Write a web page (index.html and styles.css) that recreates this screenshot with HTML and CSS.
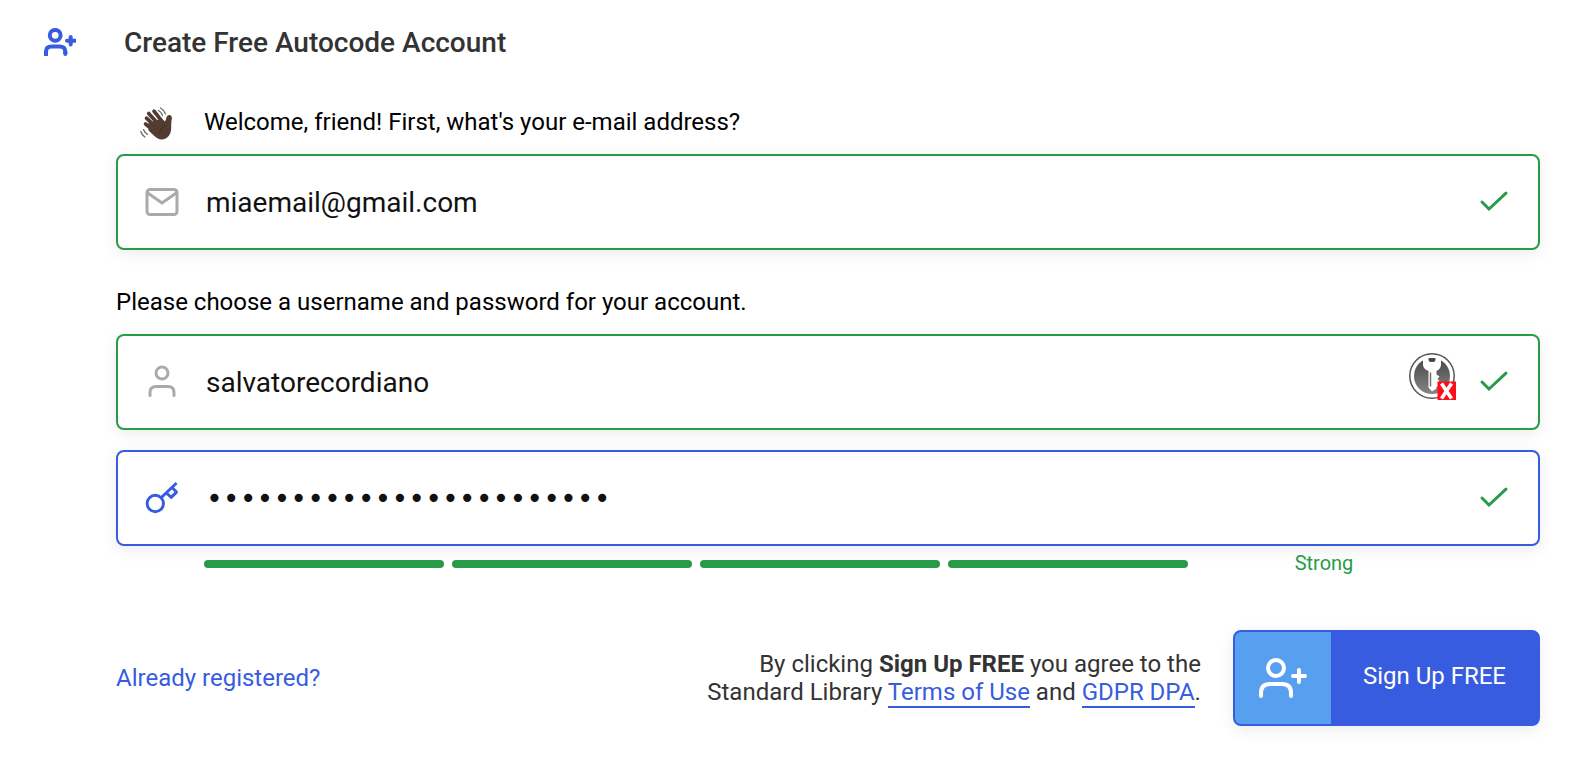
FILE: index.html
```html
<!DOCTYPE html>
<html lang="en">
<head>
<meta charset="utf-8">
<title>Create Free Autocode Account</title>
<link rel="stylesheet" href="styles.css">
</head>
<body>
<form class="signup">
  <header class="header">
    <svg class="header-icon" viewBox="0 0 32 28" aria-hidden="true">
      <g fill="none" stroke="currentColor" stroke-width="4">
        <circle cx="11.2" cy="7.3" r="5.4"/>
        <path d="M2 28v-4.500q0-5 5.500-5h8q5.800 0 5.800 5v2.500" />
        <path d="M21.300 24v2M26.700 9v7.400M23 12.700h9" stroke-linecap="round"/>
      </g>
    </svg>
    <h1 class="title">Create Free Autocode Account</h1>
  </header>

  <div class="content">
    <label class="prompt" for="email">
      <svg class="wave" viewBox="0 0 34 34" aria-hidden="true">
        <g fill="none" stroke="#523c32" stroke-width="3.700" stroke-linecap="round">
          <path d="M6.500 11.200l10 9.500M8.700 6.500l10 11M14 4.200l9 11.500M5.600 17l10 8"/>
        </g>
        <path d="M8.500 16L21.500 11.500l3.300 3c1.700-2 1.200-4.500 2.800-6 2.200-1.500 4.600.3 4.300 2.600-.4 2.800-.7 4.300-.7 7.200.3 7-1.500 11-5.500 13.300-4.500 2-8 .6-11.600-2.800L8.500 23.500z" fill="#523c32"/>
        <path d="M19.500 26c1-4 2.500-6.500 6-7.500" fill="none" stroke="#3a2922" stroke-width=".8"/>
        <g fill="none" stroke="#666" stroke-width="1.300" stroke-linecap="round">
          <path d="M18.500 3.500q3 1.500 4 5M20.500 1q3.600 2 5 6M.8 24.500q1 3.500 4 5.500M3.500 22.500q1 3 4 4.800"/>
        </g>
      </svg>
      <span>Welcome, friend! First, what's your e-mail address?</span>
    </label>
    <div class="field">
      <svg class="field-icon" viewBox="0 0 36 36" aria-hidden="true">
        <g fill="none" stroke="currentColor" stroke-width="3">
          <rect x="3" y="5.500" width="30" height="25" rx="3"/>
          <path d="M3 8.500l15 10.500 15-10.500"/>
        </g>
      </svg>
      <input class="input" id="email" type="email" value="miaemail@gmail.com">
      <svg class="check" viewBox="0 0 32 32" aria-hidden="true"><path d="M4 16l7 7L28 7.200"/></svg>
    </div>

    <p class="prompt">Please choose a username and password for your account.</p>
    <div class="credentials">
      <div class="field">
        <svg class="field-icon" viewBox="0 0 36 36" aria-hidden="true">
          <g fill="none" stroke="currentColor" stroke-width="3" stroke-linecap="round">
            <circle cx="18" cy="9" r="6"/>
            <path d="M6 31.500v-3q0-6 6-6h12q6 0 6 6v3"/>
          </g>
        </svg>
        <input class="input" id="username" type="text" aria-label="Username" value="salvatorecordiano">
        <svg class="manager" viewBox="0 0 48 60" aria-hidden="true">
          <defs>
            <linearGradient id="disc" x1="0" y1="0" x2="0" y2="1">
              <stop offset="0" stop-color="#484848"/><stop offset="1" stop-color="#858585"/>
            </linearGradient>
          </defs>
          <circle cx="24" cy="24" r="22.200" fill="#fff" stroke="#555" stroke-width="1.500"/>
          <circle cx="24" cy="24" r="18" fill="url(#disc)"/>
          <path d="M15 5.500h5.500v2q0 2.500 3.500 2.500t3.500-2.500v-2H33v8q-1 4-4.500 5.500v3.500l3 2-2 2.500 2 2-2 2 2 2-3 2v1.500L24 39.500l-3.500-4V19q-4.500-1.500-5.500-5.500z" fill="#fff"/>
          <path d="M21 6.300h6v1.500q0 2.200-3 2.200t-3-2.200z" fill="#484848"/>
          <path d="M22.500 20.500v14" stroke="#707070" stroke-width="1.500"/>
          <path d="M29.500 29.500H48V48H29.500z" fill="#ff0d1a"/>
          <path d="M33.500 31.500l10 15M43.500 31.500l-10 15" stroke="#fff" stroke-width="3.600"/>
        </svg>
        <svg class="check" viewBox="0 0 32 32" aria-hidden="true"><path d="M4 16l7 7L28 7.200"/></svg>
      </div>
      <div class="field field-active">
        <svg class="field-icon" viewBox="0 0 36 36" aria-hidden="true">
          <g fill="none" stroke="currentColor" stroke-width="2.900">
            <circle cx="11.300" cy="23.500" r="8.200"/>
            <path d="M17.200 17.600L32.600 3M22.500 13l4.700 4.400 5.300-5.300-4.200-4.400" stroke-linejoin="round"/>
          </g>
        </svg>
        <input class="input input-password" id="password" type="password" aria-label="Password" value="correcthorsebatterystapl">
        <svg class="check" viewBox="0 0 32 32" aria-hidden="true"><path d="M4 16l7 7L28 7.200"/></svg>
      </div>
    </div>

    <div class="strength">
      <span class="bar"></span>
      <span class="bar"></span>
      <span class="bar"></span>
      <span class="bar"></span>
      <span class="strength-label">Strong</span>
    </div>

    <footer class="footer">
      <a class="login" href="#">Already registered?</a>
      <p class="legal">By clicking <strong>Sign Up FREE</strong> you agree to the<br>Standard Library <a class="legal-link" href="#">Terms of Use</a> and <a class="legal-link" href="#">GDPR DPA</a>.</p>
      <button class="submit" type="button">
        <span class="submit-icon">
          <svg viewBox="0 0 48 40" aria-hidden="true">
            <g fill="none" stroke="currentColor" stroke-width="4" stroke-linecap="round">
              <circle cx="17" cy="10" r="8"/>
              <path d="M2 38v-3q0-9 9-9h12q9 0 9 9v3M40 12v12M34 18h12"/>
            </g>
          </svg>
        </span>
        <span class="submit-text">Sign Up FREE</span>
      </button>
    </footer>
  </div>
</form>
</body>
</html>
```
FILE: styles.css
```css
* {
  box-sizing: border-box;
}

body {
  margin: 0;
  background: #fff;
  color: #333;
  font: 24px/28px Roboto, sans-serif;
}

.signup {
  padding: 28px 32px 36px 44px;
}

.header {
  display: flex;
  align-items: flex-start;
  gap: 48px;
  margin-bottom: 50px;
}

.header-icon {
  width: 32px;
  height: 28px;
  color: #385ce0;
}

.title {
  margin: 0;
  font-size: 28px;
  font-weight: 500;
  line-height: 30px;
}

.content {
  padding-left: 72px;
}

.prompt {
  display: flex;
  align-items: center;
  margin: 0 0 18px;
  color: #000;
}

.wave {
  flex: none;
  width: 34px;
  height: 34px;
  margin: -1px 30px -5px 24px;
}

.field {
  display: flex;
  align-items: center;
  height: 96px;
  padding: 0 28px 0 26px;
  border: 2px solid #279b48;
  border-radius: 8px;
  background: #fff;
  box-shadow: 0 4px 16px rgba(0, 0, 0, 0.08);
  color: #aaa;
}

.field + .prompt {
  margin-top: 38px;
}

.field-active {
  border-color: #385ce0;
  color: #385ce0;
}

.field-icon {
  flex: none;
  width: 36px;
  height: 36px;
  margin-right: 26px;
}

.input {
  flex: 1;
  min-width: 0;
  padding: 2px 0 0;
  border: 0;
  outline: 0;
  background: none;
  color: #111;
  font: 28px/36px Roboto, sans-serif;
}

.input-password {
  font-family: "DejaVu Sans Mono", monospace;
}

.manager {
  flex: none;
  width: 48px;
  height: 60px;
  margin-right: 22px;
}

.check {
  flex: none;
  width: 32px;
  height: 32px;
  fill: none;
  stroke: #279b48;
  stroke-width: 3;
  stroke-linecap: round;
}

.credentials {
  display: grid;
  gap: 20px;
}

.strength {
  display: grid;
  grid-template-columns: repeat(4, 15fr) 16fr;
  align-items: center;
  gap: 8px;
  margin: 6px 88px 54px;
}

.bar {
  height: 8px;
  border-radius: 4px;
  background: #279b48;
}

.strength-label {
  padding-bottom: 2px;
  color: #279b48;
  font-size: 20px;
  line-height: 22px;
  text-align: center;
}

.footer {
  display: flex;
  align-items: center;
  gap: 32px;
}

.login,
.legal-link {
  color: #385ce0;
  text-decoration: none;
}

.legal-link {
  border-bottom: 2px solid #385ce0;
}

.legal {
  margin: 0 0 0 auto;
  text-align: right;
}

.submit {
  display: flex;
  height: 96px;
  padding: 0;
  overflow: hidden;
  border: 2px solid #385ce0;
  border-radius: 8px;
  background: #385ce0;
  box-shadow: 0 4px 16px rgba(0, 0, 0, 0.08);
  color: #fff;
  font: inherit;
  cursor: pointer;
}

.submit-icon {
  display: flex;
  align-items: center;
  padding: 0 24px;
  background: #57a0ef;
}

.submit-icon svg {
  width: 48px;
  height: 40px;
}

.submit-text {
  align-self: center;
  padding: 0 32px 4px;
}
```
